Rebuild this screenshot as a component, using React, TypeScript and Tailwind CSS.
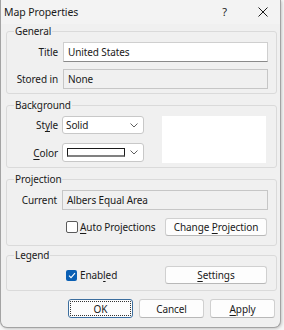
import React from "react";

function U({ children }: { children: React.ReactNode }) {
  return <span className="underline underline-offset-[2px] decoration-[1px]">{children}</span>;
}

function Chevron() {
  return (
    <svg width="8" height="5" viewBox="0 0 8 5" className="block">
      <path d="M0.5 0.5 L4 4 L7.5 0.5" fill="none" stroke="#5f5f5f" strokeWidth="1" />
    </svg>
  );
}

function Btn({ children, className = "" }: { children: React.ReactNode; className?: string }) {
  return (
    <div
      className={
        "h-[18px] flex items-center justify-center bg-[#fdfdfd] border border-[#d0d0d0] border-b-[#b8b8b8] rounded-[3px] " +
        className
      }
    >
      <span>{children}</span>
    </div>
  );
}

function Check({ checked }: { checked: boolean }) {
  return checked ? (
    <div className="w-[11px] h-[11px] rounded-[2px] bg-[#0a5fb4] flex items-center justify-center">
      <svg width="8" height="7" viewBox="0 0 8 7">
        <path d="M1 3.6 L3 5.6 L7 1.2" fill="none" stroke="white" strokeWidth="1.1" />
      </svg>
    </div>
  ) : (
    <div className="w-[12px] h-[12px] rounded-[2px] bg-white border border-[#5a5a5a]" />
  );
}

export default function App() {
  return (
    <div className="w-[284px] h-[330px] bg-[#f6f6f6] font-['Noto_Sans',sans-serif] text-[10px] leading-[14px] text-[#1a1a1a] tracking-[-0.1px]">
      <div className="w-[281px] h-[328px] bg-[#f0f0f0] border border-t-0 border-[#a3a3a3] rounded-b-[7px] shadow-[1px_1px_3px_rgba(0,0,0,0.2)] flex flex-col">
        {/* title bar */}
        <div className="h-[24px] flex items-center pl-[3px] bg-[#f3f3f3]">
          <span className="text-[10.5px]">Map Properties</span>
          <span className="ml-auto mr-[31px] text-[11px]">?</span>
          <svg width="10" height="10" viewBox="0 0 10 10" className="mr-[12px]">
            <path d="M0.5 0.5 L9.5 9.5 M9.5 0.5 L0.5 9.5" stroke="#1a1a1a" strokeWidth="1" />
          </svg>
        </div>

        <div className="flex flex-col pl-[5px]">
          {/* General */}
          <fieldset className="w-[271px] border border-[#dadada] rounded-[3px] pr-[8px] pt-[4px] pb-[4px]">
            <legend className="ml-[7px] px-[1px]">General</legend>
            <div className="flex flex-col gap-[7px]">
              <div className="flex items-center">
                <span className="w-[51px] text-right mr-[5px]">Title</span>
                <div className="flex-1 h-[20px] bg-white border border-[#cfcfcf] border-b-[#8a8a8a] flex items-center pl-[4px]">
                  United States
                </div>
              </div>
              <div className="flex items-center">
                <span className="w-[51px] text-right mr-[5px]">Stored in</span>
                <div className="flex-1 h-[20px] bg-[#f0f0f0] border border-[#c6c6c6] flex items-center pl-[4px]">
                  None
                </div>
              </div>
            </div>
          </fieldset>

          {/* Background */}
          <fieldset className="mt-[4px] w-[271px] border border-[#dadada] rounded-[3px] pr-[10px] pt-[4px] pb-[4px]">
            <legend className="ml-[7px] px-[1px]">Background</legend>
            <div className="flex items-start">
              <div className="flex flex-col gap-[9px]">
                <div className="flex items-center">
                  <span className="w-[51px] text-right mr-[4px]">
                    St<U>y</U>le
                  </span>
                  <div className="w-[82px] h-[18px] bg-white border border-[#c8c8c8] rounded-[3px] flex items-center pl-[3px] pr-[5px]">
                    <span>Solid</span>
                    <span className="ml-auto">
                      <Chevron />
                    </span>
                  </div>
                </div>
                <div className="flex items-center">
                  <span className="w-[51px] text-right mr-[4px]">
                    <U>C</U>olor
                  </span>
                  <div className="w-[82px] h-[19px] bg-white border border-[#c8c8c8] rounded-[3px] flex items-center pl-[4px] pr-[5px]">
                    <div className="w-[58px] h-[9px] bg-white border border-[#1a1a1a] border-b-[2px] border-b-[#808080]" />
                    <span className="ml-auto">
                      <Chevron />
                    </span>
                  </div>
                </div>
              </div>
              <div className="ml-auto w-[104px] h-[47px] bg-white" />
            </div>
          </fieldset>

          {/* Projection */}
          <fieldset className="mt-[4px] w-[271px] border border-[#dadada] rounded-[3px] pr-[9px] pt-[4px] pb-[9px]">
            <legend className="ml-[7px] px-[1px]">Projection</legend>
            <div className="flex flex-col gap-[8px]">
              <div className="flex items-center pr-0">
                <span className="w-[50px] text-right mr-[5px]">Current</span>
                <div className="flex-1 h-[20px] bg-[#f0f0f0] border border-[#c6c6c6] flex items-center pl-[4px] mr-[-1px]">
                  Albers Equal Area
                </div>
              </div>
              <div className="flex items-center">
                <div className="ml-[59px] flex items-center gap-[2px]">
                  <Check checked={false} />
                  <span>
                    <U>A</U>uto Projections
                  </span>
                </div>
                <Btn className="ml-auto w-[102px]">
                  Change <U>P</U>rojection
                </Btn>
              </div>
            </div>
          </fieldset>

          {/* Legend */}
          <fieldset className="mt-[2px] w-[271px] border border-[#dadada] rounded-[3px] pr-[9px] pt-[4px] pb-[6px]">
            <legend className="ml-[7px] px-[1px]">Legend</legend>
            <div className="flex items-center">
              <div className="ml-[59px] flex items-center gap-[3px]">
                <Check checked={true} />
                <span>
                  Enab<U>l</U>ed
                </span>
              </div>
              <Btn className="ml-auto w-[102px]">
                <U>S</U>ettings
              </Btn>
            </div>
          </fieldset>
        </div>

        {/* dialog buttons */}
        <div className="mt-[8px] flex justify-end gap-[6px] pr-[5px]">
          <div className="w-[65px] h-[19px] flex items-center justify-center bg-[#fdfdfd] border border-[#3c6e9e] rounded-[3px] outline-dotted outline-1 outline-offset-[-3px] outline-[#333]">
            OK
          </div>
          <Btn className="w-[65px] h-[19px]">Cancel</Btn>
          <Btn className="w-[65px] h-[19px]">
            <U>A</U>pply
          </Btn>
        </div>
      </div>
    </div>
  );
}
